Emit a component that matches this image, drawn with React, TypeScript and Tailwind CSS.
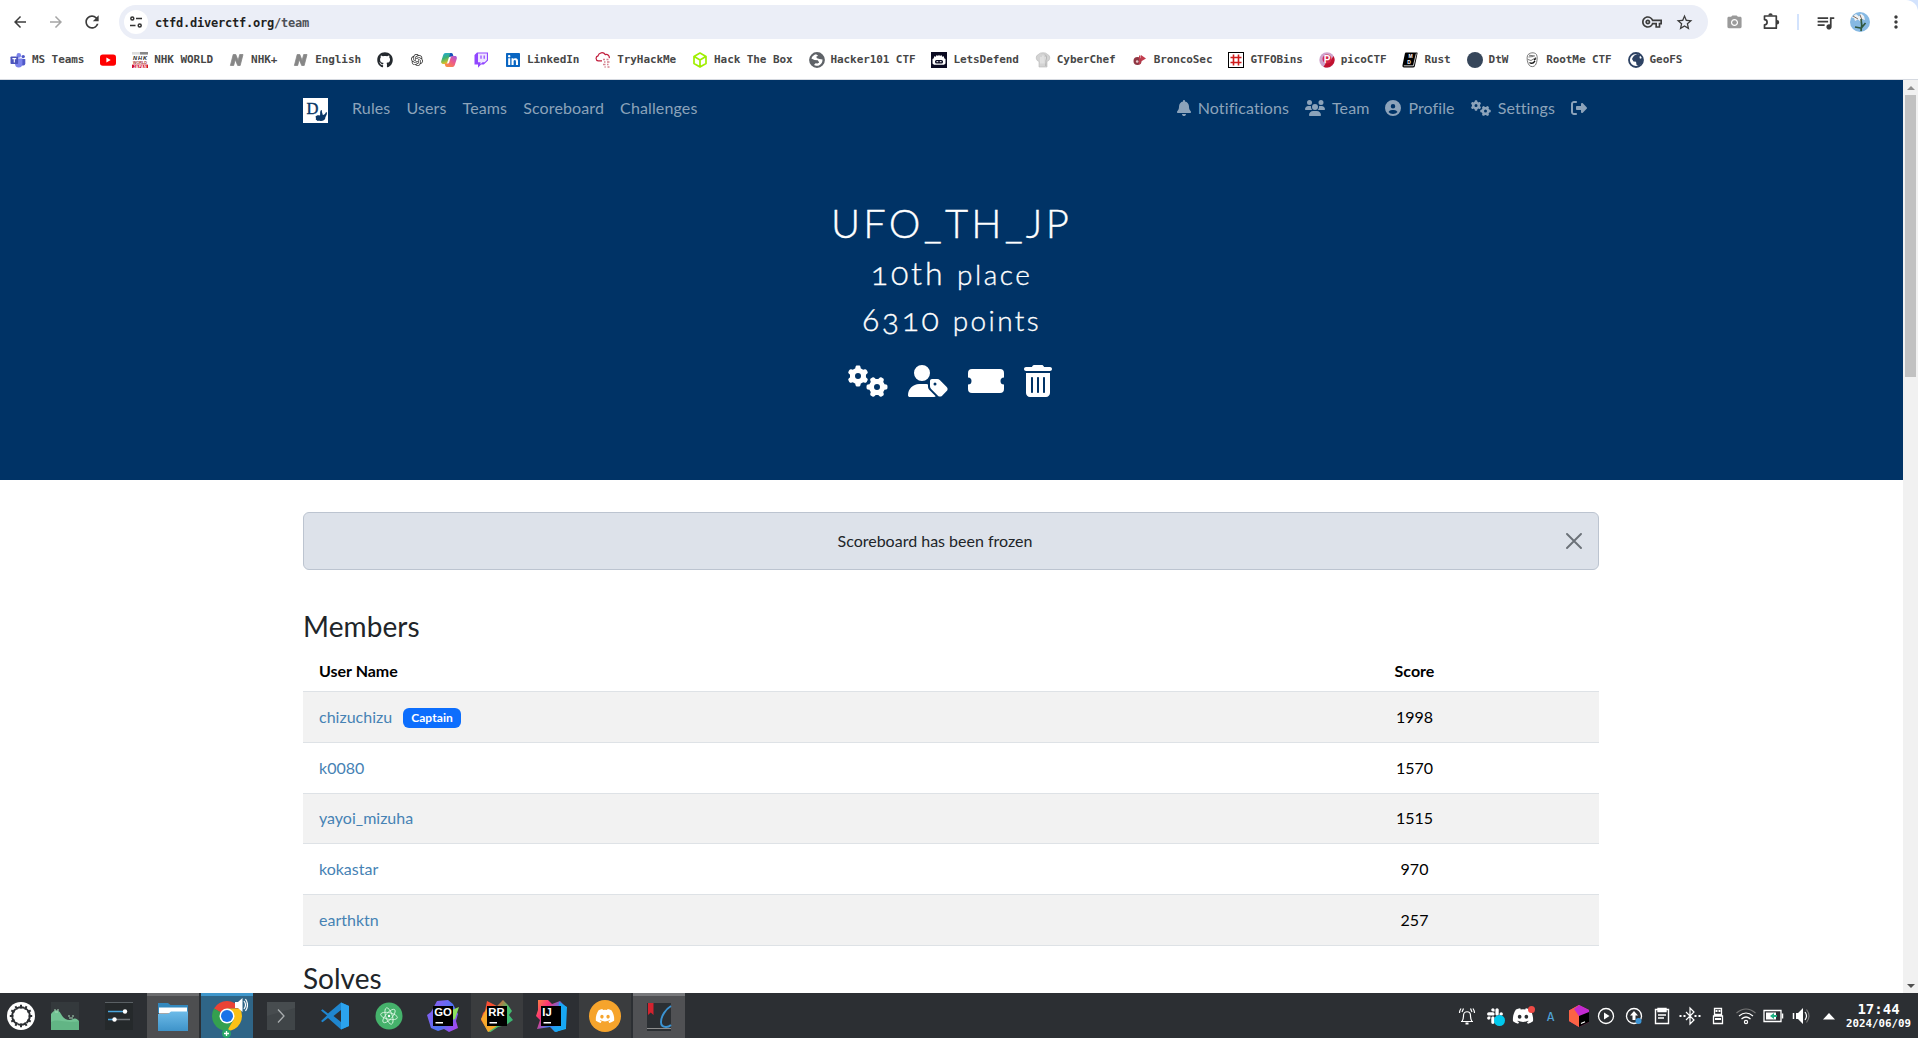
import React from "react";
import {
  FaBell,
  FaUsers,
  FaCircleUser,
  FaGears,
  FaRightFromBracket,
  FaUserTag,
  FaTrashCan,
  FaGithub,
  FaLinkedin,
  FaDiscord,
  FaSlack,
} from "react-icons/fa6";
import {
  MdArrowBack,
  MdArrowForward,
  MdRefresh,
  MdOutlineVpnKey,
  MdStarBorder,
  MdPhotoCamera,
  MdQueueMusic,
  MdMoreVert,
} from "react-icons/md";
import { SiOpenai } from "react-icons/si";

/* ---------- bookmark icons (16 x 16) ---------- */

const I = "block h-4 w-4 shrink-0";
const glyph = { fontFamily: "Liberation Sans, sans-serif", fontWeight: 700 };

const TeamsIcon = () => (
  <svg className={I} viewBox="0 0 16 16">
    <circle cx="13.2" cy="4.6" r="1.7" fill="#5059c9" />
    <path d="M11 7h4.3v4.4a2.3 2.3 0 0 1-4.3 1z" fill="#5059c9" />
    <circle cx="8.8" cy="3.4" r="2.3" fill="#7b83eb" />
    <path d="M5 6.5h7.4v5.2a3.7 3.7 0 0 1-7.4 0z" fill="#7b83eb" />
    <rect x="0.5" y="4.5" width="7.6" height="7.6" rx="0.8" fill="#4b53bc" />
    <path d="M2.4 6.6h3.8M4.3 6.6v4" stroke="#fff" strokeWidth="1.1" />
  </svg>
);
const YoutubeIcon = () => (
  <svg className={I} viewBox="0 0 16 16">
    <rect y="2.4" width="16" height="11.4" rx="2.8" fill="#f00" />
    <path d="M6.4 5.6v5l4.3-2.5z" fill="#fff" />
  </svg>
);
const NhkIcon = () => (
  <svg className={I} viewBox="0 0 16 16">
    <rect x="0" y="0" width="8" height="2.6" fill="#ddd" />
    <rect x="8" y="0" width="8" height="2.6" fill="#888" />
    <text x="8" y="8.2" fontSize="5.6" textAnchor="middle" fontStyle="italic" textLength="14" style={glyph} fill="#222">NHK</text>
    <text x="8" y="12.2" fontSize="3.8" textAnchor="middle" textLength="14" style={glyph} fill="#a33">WORLD</text>
    <rect y="12.6" width="16" height="3.4" fill="#d2102c" />
    <text x="8" y="15.7" fontSize="3.6" textAnchor="middle" textLength="13" style={glyph} fill="#fff">JAPAN</text>
  </svg>
);
const NIcon = () => (
  <svg className={I} viewBox="0 0 16 16">
    <path d="M1.400 13.500 4.200 2.500h2.600l2.300 6L10.700 2.500H14l-2.800 11H8.700L6.200 7.400 4.700 13.500z" fill="#868686" stroke="#868686" strokeWidth="0.8" strokeLinejoin="round" />
  </svg>
);
const CopilotIcon = () => (
  <svg className={I} viewBox="0 0 16 16">
    <defs>
      <linearGradient id="cpa" x1="0" y1="0" x2="0.4" y2="1">
        <stop offset="0" stopColor="#1ea7e6" />
        <stop offset="0.5" stopColor="#3bb273" />
        <stop offset="1" stopColor="#f5c518" />
      </linearGradient>
      <linearGradient id="cpb" x1="1" y1="0" x2="0.2" y2="1">
        <stop offset="0" stopColor="#a05ae0" />
        <stop offset="0.5" stopColor="#ee5a8a" />
        <stop offset="1" stopColor="#f9913d" />
      </linearGradient>
    </defs>
    <path d="M4.600 1H10c1.200 0 1.700.8 2 2l.4 1.400H9.500c-1 0-1.500.6-1.800 1.600L6.300 10.400c-.3 1-.9 1.500-1.800 1.500H2c-1.500 0-2.200-1.100-1.700-2.900l1.900-6C2.700 1.700 3.300 1 4.600 1z" fill="url(#cpa)" />
    <path d="M9.300 1H10c1.200 0 1.700.8 2 2l.4 1.400H9.500L8 5z" fill="#1c4fbf" />
    <path d="M11.400 15H6c-1.200 0-1.700-.8-2-2l-.4-1.400h2.900c1 0 1.500-.6 1.800-1.600l1.400-4.400c.3-1 .9-1.500 1.800-1.500H14c1.500 0 2.200 1.100 1.700 2.900l-1.900 6c-.5 1.300-1.100 2-2.400 2z" fill="url(#cpb)" />
  </svg>
);
const TwitchIcon = () => (
  <svg className={I} viewBox="0 0 16 16">
    <path d="M4 .4h11v8.200L10.800 12.500H8L5 15.700v-3.200H1.500V3z" fill="#9146ff" />
    <path d="M5 1.600h8.900v6.500l-2.200 2.200H9.500l-2 2v-2H5z" fill="#efe6ff" />
    <path d="M8 3.600v3.200M11.200 3.600v3.200" stroke="#9146ff" strokeWidth="1.200" />
  </svg>
);
const ThmIcon = () => (
  <svg className={I} viewBox="0 0 16 16" fill="none">
    <path d="M7 8.800H3.200A2.500 2.500 0 0 1 3 3.900 4 4 0 0 1 10.300 2.600a3 3 0 0 1 3.900 3.600" stroke="#c11d3c" strokeWidth="1.200" />
    <path d="M8 7.500h2M11.500 7.500h2M9 10h1.500M12 10h2.500M8 12.500h2.500M12 12.500h1.500M9.500 15h1.200M12.500 15h2" stroke="#d4828f" strokeWidth="1.400" />
  </svg>
);
const HtbIcon = () => (
  <svg className={I} viewBox="0 0 16 16" fill="none" stroke="#9fef00" strokeWidth="1.700" strokeLinejoin="round">
    <path d="M8 1 14 4.400v7.200L8 15l-6-3.400V4.400zM2.200 4.600 8 8l5.800-3.400M8 8v6.800" />
  </svg>
);
const GlobeIcon = ({ dark }: { dark?: boolean }) => (
  <svg className={I} viewBox="0 0 16 16">
    <circle cx="8" cy="8" r="7" fill={dark ? "#fff" : "#5f6368"} stroke={dark ? "#2d4263" : "#5f6368"} strokeWidth="1.800" />
    {dark ? (
      <path d="M9.500 2C6.500 2.500 5 4.500 4 7l1.500 2.500L8 9.800l.5 3 2 1.200 3.500-3V6l-2 .8-.6-2L13 3.600z" fill="#2d4263" />
    ) : (
      <path d="M7 2.200c-2 .6-3.700 1.800-4.600 4.200L5.500 8l3.300.200 1.400 2.200-1.700 1.200-2-.4L5 13c1 .7 3.500 1 5 .4 2.500-1 3.600-3.200 3.500-5.800L10.500 7 8 6.200l-.8-1.500 2-1z" fill="#fff" />
    )}
  </svg>
);
const LdIcon = () => (
  <svg className={I} viewBox="0 0 16 16">
    <rect width="16" height="16" fill="#0b0b22" />
    <path d="M1.500 11.500V7l1.300-.7.300-2 1.600.4 1-1.600 1.300 1L8 2.700l1 1.400 1.400-1 .9 1.600 1.600-.4.300 2 1.300.7v4.500l-1.500 1.200h-10z" fill="#fff" />
    <rect x="4" y="8" width="8" height="3.400" rx="1.500" fill="#0b0b22" />
    <path d="M5.500 9.700h1.800M8.700 9.700h1.800" stroke="#fff" strokeWidth="1" />
  </svg>
);
const ChefIcon = () => (
  <svg className={I} viewBox="0 0 16 16">
    <path d="M4 15V9.500A3.800 3.800 0 0 1 3.600 2.300 5 5 0 0 1 8 .8a5 5 0 0 1 4.400 1.500A3.800 3.800 0 0 1 12 9.500V15z" fill="#d3d3d3" stroke="#b5b5b5" strokeWidth="0.600" />
    <path d="M6 5v6.500M8 3.500v8M10.200 5v6.500" stroke="#f1f1f1" strokeWidth="0.900" />
    <path d="M10 2.500c2 1.500 1.400 4 .8 6V14" stroke="#999" strokeWidth="0.600" fill="none" />
  </svg>
);
const BroncoIcon = () => (
  <svg className={I} viewBox="0 0 16 16">
    <circle cx="5.500" cy="9" r="4" fill="#8f3743" />
    <path d="M7 3.500h1.600V12H7zM9 3l5 3.500-5 3z" fill="#c23c4d" />
    <circle cx="5.200" cy="9.500" r="1.300" fill="#e9c9cd" />
  </svg>
);
const GtfoIcon = () => (
  <svg className={I} viewBox="0 0 16 16">
    <rect x="0.500" y="0.500" width="15" height="15" fill="#fff" stroke="#000" />
    <path d="M5.500 2.500v11M10.500 2.500v11M2.500 5.500h11M2.500 10.500h11" stroke="#cf1b1b" strokeWidth="1.600" />
  </svg>
);
const PicoIcon = () => (
  <svg className={I} viewBox="0 0 16 16">
    <circle cx="8" cy="8" r="7.700" fill="#cfa3cc" />
    <path d="M14.500 4a7.700 7.700 0 0 1-10 10.700L7 11l4-1.500z" fill="#c1122f" />
    <circle cx="8" cy="7" r="4.500" fill="#d42346" />
    <text x="8" y="11.300" fontSize="10" textAnchor="middle" style={glyph} fill="#fff">P</text>
  </svg>
);
const RustIcon = () => (
  <svg className={I} viewBox="0 0 16 16">
    <path d="M4.200.5h10.600c.6 0 .8.400.700.900l-2.700 12.800c-.200.800-.7 1.200-1.500 1.200H2C.8 15.400.2 14.600.5 13.300L2.900 1.600C3 .9 3.500.5 4.200.5z" fill="#000" />
    <path d="M1.800 13.800h9.600L14.300 1.500" stroke="#fff" strokeWidth="0.800" fill="none" />
    <text x="8.500" y="6.300" fontSize="5" textAnchor="middle" style={glyph} fill="#fff">M</text>
    <text x="7" y="11.800" fontSize="5" textAnchor="middle" style={glyph} fill="#fff">D</text>
  </svg>
);
const DtwIcon = () => (
  <svg className={I} viewBox="0 0 16 16">
    <circle cx="8" cy="8" r="8" fill="#36465a" />
  </svg>
);
const RootIcon = () => (
  <svg className={I} viewBox="0 0 16 16" fill="none" stroke="#555" strokeWidth="0.800">
    <path d="M3.500 3.500C5 .5 10.500-.2 12.500 2.500c1.300 2 .7 8-1 10.500-1.500 2-4.500 2.200-6.200.3C3.500 11.500 2.500 6 3.500 3.500zM4 7.500l3 1 5-3M5 3.200l6 .800M4.500 5l5-.5" />
    <path d="M5.500 10.500c2 1.500 4 .5 5.500-1.500M10 8l2-1.500" stroke="#111" strokeWidth="1.300" />
  </svg>
);

const bookmarks: { icon: React.ReactNode; label?: string }[] = [
  { icon: <TeamsIcon />, label: "MS Teams" },
  { icon: <YoutubeIcon /> },
  { icon: <NhkIcon />, label: "NHK WORLD" },
  { icon: <NIcon />, label: "NHK+" },
  { icon: <NIcon />, label: "English" },
  { icon: <FaGithub className="block h-4 w-4 shrink-0 text-[#24292e]" /> },
  { icon: <SiOpenai className="m-0.5 block h-3 w-3 shrink-0 text-[#333]" /> },
  { icon: <CopilotIcon /> },
  { icon: <TwitchIcon /> },
  { icon: <FaLinkedin className="block h-4 w-4 shrink-0 text-[#0a66c2]" />, label: "LinkedIn" },
  { icon: <ThmIcon />, label: "TryHackMe" },
  { icon: <HtbIcon />, label: "Hack The Box" },
  { icon: <GlobeIcon />, label: "Hacker101 CTF" },
  { icon: <LdIcon />, label: "LetsDefend" },
  { icon: <ChefIcon />, label: "CyberChef" },
  { icon: <BroncoIcon />, label: "BroncoSec" },
  { icon: <GtfoIcon />, label: "GTFOBins" },
  { icon: <PicoIcon />, label: "picoCTF" },
  { icon: <RustIcon />, label: "Rust" },
  { icon: <DtwIcon />, label: "DtW" },
  { icon: <RootIcon />, label: "RootMe CTF" },
  { icon: <GlobeIcon dark />, label: "GeoFS" },
];

/* ---------- browser chrome ---------- */

function Toolbar() {
  return (
    <div className="flex h-11 items-center pl-[11px] text-[#3c3c3c]">
      <MdArrowBack className="h-[18px] w-[18px]" />
      <MdArrowForward className="ml-[18px] h-[18px] w-[18px] text-[#a5a5a5]" />
      <MdRefresh className="ml-[17px] h-[20px] w-[20px]" />
      <div className="ml-[17px] flex h-[34px] w-[1589px] items-center rounded-full bg-[#ebeef7] pl-[5px] pr-[14px]">
        <div className="flex h-6 w-6 items-center justify-center rounded-full bg-white">
          <svg className="h-3 w-3" viewBox="0 0 12 12" fill="none" stroke="#333" strokeWidth="1.500">
            <circle cx="2.300" cy="2.500" r="1.500" />
            <path d="M6 2.500h6M0 9.500h5.500" />
            <circle cx="9.700" cy="9.500" r="1.500" />
          </svg>
        </div>
        <span className="ml-[7px] mt-0.5 font-['DejaVu_Sans_Mono',monospace] text-[12px] font-bold tracking-[-0.22px] text-[#1f1f1f]">
          ctfd.diverctf.org<span className="text-[#4f5257]">/team</span>
        </span>
        <MdOutlineVpnKey className="ml-auto h-5 w-5" />
        <MdStarBorder className="ml-[13px] h-[19px] w-[19px]" />
      </div>
      <MdPhotoCamera className="ml-[18px] h-[17px] w-[17px] text-[#9a9a9a]" />
      <svg className="ml-[18px] h-5 w-5" viewBox="0 0 20 20">
        <path d="M3.500 4h11.800v12.200H3.500v-3.400c1.700 0 2.600-1.200 2.600-2.600s-.9-2.600-2.600-2.600z" fill="none" stroke="#3c3c3c" strokeWidth="1.700" strokeLinejoin="round" />
        <path d="M7.300 3.500a2.200 2.200 0 0 1 4.400 0zM16 8a2.200 2.200 0 0 1 0 4.400z" fill="#3c3c3c" />
      </svg>
      <div className="ml-[16px] h-4 w-0.5 bg-[#d3e3fd]" />
      <MdQueueMusic className="ml-[16px] h-[21px] w-[21px]" />
      <svg className="ml-[14px] h-5 w-5" viewBox="0 0 20 20">
        <circle cx="10" cy="10" r="10" fill="#86b9e3" />
        <path d="M1.500 5.500 6 2l3 2.500L11 1.500l3 2.500 1 4-3-1-1 3-3-2.500L5 9 4 6z" fill="#eef1f4" />
        <path d="M3 4l5 3M10 3l2 5" stroke="#75604d" strokeWidth="0.900" />
        <path d="M11 7c1 4 1 8 0 12M10.500 17l5-6M10.500 16 5 15" stroke="#31583f" strokeWidth="1.700" fill="none" />
      </svg>
      <MdMoreVert className="ml-[16px] h-5 w-5" />
    </div>
  );
}

function BookmarkBar() {
  return (
    <div className="flex h-[35px] items-center gap-4 border-b border-[#d5d9e0] pb-[5px] pl-[10px]">
      {bookmarks.map((b, i) => (
        <div key={i} className="flex shrink-0 items-center gap-1.5">
          {b.icon}
          {b.label && (
            <span className="mt-px whitespace-pre font-['DejaVu_Sans_Mono',monospace] text-[11px] leading-4 font-bold tracking-[-0.088px] text-[#474747]">
              {b.label}
            </span>
          )}
        </div>
      ))}
    </div>
  );
}

/* ---------- page ---------- */

const navLeft = ["Rules", "Users", "Teams", "Scoreboard", "Challenges"];

function Navbar() {
  return (
    <nav className="ml-[303px] flex h-14 w-[1296px] items-center text-base tracking-[0.1px] text-[#8ca3ba]">
      <svg className="mr-4 mt-[5px] h-[25px] w-[25px]" viewBox="0 0 25 25">
        <rect width="25" height="25" fill="#fff" />
        <text x="3.500" y="15.700" fontSize="16.500" fontFamily="Liberation Serif, serif" fontWeight="400" stroke="#0a3766" strokeWidth="0.400" fill="#0a3766">D</text>
        <path d="M12.500 18.500c1.500-1.500 3-1.500 4.500-1 .5-2-.5-3.500 1-5.500l1 .5c-.5 2 .8 3 .8 4.500 1.500 0 3-1.500 3.200-3 1 .3 1.200 1.200.7 2.500-.8 2-1.500 2.500-1.500 4-.5 1.500-2 2.500-4 2.500s-2-.5-3.500 0c-.8-1-1.800-.8-2-2 .8-.5 0-1.500-.2-2.500z" fill="#0a3766" />
      </svg>
      {navLeft.map((n) => (
        <a key={n} className="mb-px px-2 tracking-[0.13px]">{n}</a>
      ))}
      <div className="mb-px ml-auto flex items-center">
        <a className="flex items-center px-2"><FaBell className="mr-[7px] h-4 w-3.5" />Notifications</a>
        <a className="flex items-center px-2"><FaUsers className="mr-[7px] h-4 w-5" />Team</a>
        <a className="flex items-center px-2"><FaCircleUser className="mr-[7px] h-4 w-4" />Profile</a>
        <a className="flex items-center px-2"><FaGears className="mr-[7px] h-4 w-5" />Settings</a>
        <a className="flex items-center pl-2 pr-3"><FaRightFromBracket className="h-4 w-4" /></a>
      </div>
    </nav>
  );
}

function Hero() {
  return (
    <header className="h-[400px] bg-[#003366] text-white">
      <Navbar />
      <div className="flex flex-col items-center pt-[63px] font-light [font-variant-numeric:oldstyle-nums] [-webkit-text-stroke:0.35px_white]">
        <h1 className="text-[40px] leading-[48px] tracking-[3.2px]">UFO_TH_JP</h1>
        <h2 className="mt-[7px] text-[32px] leading-[38px] tracking-[2.9px]">
          10th <small className="text-[28px] tracking-[2.5px]">place</small>
        </h2>
        <h2 className="mt-[7px] text-[32px] leading-[38px] tracking-[2.6px]">
          6310 <small className="text-[28px] tracking-[2.4px]">points</small>
        </h2>
        <div className="mt-[26px] mr-[3px] flex items-center gap-5">
          <FaGears className="h-8 w-10" />
          <FaUserTag className="h-8 w-10" />
          <svg className="h-8 w-9" viewBox="0 0 36 32">
            <path d="M4 4h28a4 4 0 0 1 4 4v4.500a3.500 3.500 0 0 0 0 7V24a4 4 0 0 1-4 4H4a4 4 0 0 1-4-4v-4.500a3.500 3.500 0 0 0 0-7V8a4 4 0 0 1 4-4z" fill="#fff" />
          </svg>
          <FaTrashCan className="h-8 w-7" />
        </div>
      </div>
    </header>
  );
}

const members = [
  { name: "chizuchizu", score: 1998, captain: true },
  { name: "k0080", score: 1570 },
  { name: "yayoi_mizuha", score: 1515 },
  { name: "kokastar", score: 970 },
  { name: "earthktn", score: 257 },
];

function Content() {
  return (
    <main className="ml-[303px] w-[1296px] pt-8 text-[#212529]">
      <div className="flex h-[58px] items-center rounded-md border border-[#bcc4d0] bg-[#dde2ea] px-4">
        <span className="flex-1 pr-4 text-center">Scoreboard has been frozen</span>
        <svg className="h-4 w-4" viewBox="0 0 16 16">
          <path d="M1 1l14 14M15 1 1 15" stroke="#6b7178" strokeWidth="1.900" strokeLinecap="round" />
        </svg>
      </div>
      <h3 className="mt-[39px] text-[28px] leading-[34px] tracking-[0.1px]">Members</h3>
      <div className="mt-[9px] text-black">
        <div className="grid h-10 grid-cols-[1fr_369px] items-center border-b border-[#dee2e6] pb-px font-bold">
          <span className="pl-4">User Name</span>
          <span className="text-center">Score</span>
        </div>
        {members.map((m) => (
          <div key={m.name} className="grid h-[50.8px] grid-cols-[1fr_369px] items-center border-b border-[#dee2e6] odd:bg-white even:bg-[#f2f2f2]">
            <span className="flex items-center pl-4 text-[#4682b4]">
              {m.name}
              {m.captain && (
                <span className="ml-[11px] mt-0.5 rounded-md bg-[#0d6efd] px-2 py-1 text-[12px] leading-3 font-bold tracking-[0.1px] text-white">Captain</span>
              )}
            </span>
            <span className="text-center">{m.score}</span>
          </div>
        ))}
      </div>
      <h3 className="mt-[15px] text-[28px] leading-[34px]">Solves</h3>
    </main>
  );
}

function Scrollbar() {
  return (
    <div className="flex w-[15px] flex-col items-center bg-[#f1f1f1]">
      <div className="flex h-[15px] items-center">
        <div className="border-x-4 border-b-4 border-x-transparent border-b-[#8f8f8f]" />
      </div>
      <div className="h-[282px] w-[11px] bg-[#c1c1c1]" />
      <div className="mt-auto flex h-[15px] items-center">
        <div className="border-x-4 border-t-4 border-x-transparent border-t-[#505050]" />
      </div>
    </div>
  );
}

/* ---------- taskbar ---------- */

const T = "block h-8 w-8";

function Badge({ id, label, stops, shape, tip }: { id: string; label: string; stops: string[]; shape: string; tip?: React.ReactNode }) {
  return (
    <svg className={T} viewBox="0 0 32 32">
      <defs>
        <linearGradient id={id} x1="0" y1="0" x2="1" y2="0.700">
          {stops.map((s, i) => (
            <stop key={i} offset={i / (stops.length - 1)} stopColor={s} />
          ))}
        </linearGradient>
      </defs>
      <path d={shape} fill={`url(#${id})`} />
      {tip}
      <rect x="6" y="6" width="20" height="20" fill="#000" />
      <text x="7.300" y="16" fontSize="11.300" style={glyph} fill="#fff">{label}</text>
      <rect x="8.500" y="22" width="7.500" height="1.500" fill="#fff" />
    </svg>
  );
}

const apps: { cell?: string; icon: React.ReactNode }[] = [
  {
    icon: (
      <svg className={T} viewBox="0 0 32 32">
        <rect x="2" y="2" width="28" height="28" fill="#34393c" />
        <path d="M2 14c3-4 7-6 10 0s8 7 12 5c3-1 4 0 6 2v9H2z" fill="#72c394" />
        <path d="M2 22c8-4 14 2 28-1v9H2z" fill="#62b585" />
        <path d="M6 9v2M9 9v2M6 12h3M20 15v2M24 15v2M20 18h4" stroke="#a9d9b9" strokeWidth="1" />
      </svg>
    ),
  },
  {
    icon: (
      <svg className={T} viewBox="0 0 32 32">
        <rect x="2" y="2" width="28" height="28" fill="#25292b" />
        <path d="M2 2.500h28" stroke="#5a6064" />
        <path d="M5 11.500h16M5 19.500h6" stroke="#4aa7de" strokeWidth="1.500" />
        <path d="M12 19.500h15" stroke="#72777b" strokeWidth="1.500" />
        <circle cx="22" cy="11.500" r="2.200" fill="#fff" />
        <circle cx="11.500" cy="19.500" r="2.200" fill="#fff" />
      </svg>
    ),
  },
  {
    cell: "bg-[#4d4e50] border-t-[3px] border-[#6b6c6e]",
    icon: (
      <svg className={T} viewBox="0 0 32 32">
        <defs>
          <linearGradient id="fold" x1="0" y1="0" x2="0" y2="1">
            <stop offset="0" stopColor="#6dbbe8" />
            <stop offset="1" stopColor="#3e93c9" />
          </linearGradient>
        </defs>
        <path d="M1 2h10l2.500 2H31v8H1z" fill="#3388bd" />
        <path d="M2 6.500h28v6H2z" fill="#fff" />
        <path d="M1 13h10l3-2.500h17V30H1z" fill="url(#fold)" />
      </svg>
    ),
  },
  {
    cell: "bg-[#2f6587] border-t-[3px] border-[#3f97cc]",
    icon: (
      <svg className="block h-[42px] w-[42px]" viewBox="0 0 42 42">
        <path d="M21 20 8.010 12.500A15 15 0 0 1 33.990 12.500H21z" fill="#ea4335" />
        <path d="M21 20 8.010 12.500A15 15 0 0 0 21 35l6.500-11.250z" fill="#34a04f" />
        <path d="M21 12.500h12.990A15 15 0 0 1 21 35l6.500-11.250z" fill="#fbc116" />
        <circle cx="21" cy="20" r="7.500" fill="#fff" />
        <circle cx="21" cy="20" r="6" fill="#1a73e8" />
        <path d="M29 6h3l4.500-4v14L32 12h-3z" fill="#fff" />
        <path d="M38 5q3 4 0 8M39.500 3q4 6 0 12" stroke="#fff" strokeWidth="1.200" fill="none" />
        <circle cx="20.500" cy="37.500" r="4.500" fill="#27a567" />
        <path d="M20.500 35v5M18 37.500h5" stroke="#fff" strokeWidth="1.300" />
      </svg>
    ),
  },
  {
    icon: (
      <svg className={T} viewBox="0 0 32 32">
        <rect x="2" y="2" width="28" height="28" fill="#474c4f" />
        <path d="M2 30V16l28-8v22z" fill="#404548" />
        <path d="M13 9.500 19 16l-6 6.500" stroke="#a9adaf" strokeWidth="1.300" fill="none" />
      </svg>
    ),
  },
  {
    icon: (
      <svg className={T} viewBox="0 0 32 32">
        <path d="M22 2.500 30 6v20l-8 3.500L9 18l-5.500 4.200L2 21l6-5.500L2 10.500l1.500-1.200L9 13.500zM22 10l-7.500 6 7.500 6z" fill="#1f86cf" fillRule="evenodd" />
        <path d="M22 2.500 30 6v20l-8 3.500z" fill="#2ba3ee" />
      </svg>
    ),
  },
  {
    icon: (
      <svg className={T} viewBox="0 0 32 32">
        <circle cx="16" cy="16" r="13.500" fill="#45b26b" />
        <g fill="none" stroke="#d3f2dc" strokeWidth="0.900">
          <ellipse cx="16" cy="16" rx="8.500" ry="3.300" transform="rotate(12 16 16)" />
          <ellipse cx="16" cy="16" rx="8.500" ry="3.300" transform="rotate(72 16 16)" />
          <ellipse cx="16" cy="16" rx="8.500" ry="3.300" transform="rotate(132 16 16)" />
        </g>
        <circle cx="16" cy="16" r="1.200" fill="#fff" />
      </svg>
    ),
  },
  {
    icon: (
      <Badge
        id="go"
        label="GO"
        stops={["#7c5cf5", "#7a63f0", "#4b74f3", "#a149ee"]}
        shape="M10 1 21 0l5 4 5 10-2 7 2 7-9 4-5-3-6 2-7-3-4-13 4-3z"
        tip={<path d="M25 10 32 7l-4 12-3 1z" fill="#8be05f" />}
      />
    ),
  },
  {
    cell: "bg-[#3a3c3e]",
    icon: (
      <Badge
        id="rr"
        label="RR"
        stops={["#fb4b3c", "#f8502e", "#4abf6c", "#35b574"]}
        shape="M6 1l10 5 6-6 5 5 4 6-3 4 4 5-7 5-8 2-9 6-8-13 2-7 2-2z"
        tip={<path d="M0 19 6 8v16l10 2-9 6z" fill="#f6a82c" />}
      />
    ),
  },
  {
    icon: (
      <Badge
        id="ij"
        label="IJ"
        stops={["#fc8a3c", "#fc3176", "#3d7bf4", "#1fb4f5"]}
        shape="M3 0h10l4 4 8-3 6 6v22l-11 3-5-5-13 2 3-9-4-4 2-6z"
        tip={<path d="M24 2l8 5-1 21-10 4-4-5h8z" fill="#18a7f3" />}
      />
    ),
  },
  {
    cell: "bg-[#3a3c3e]",
    icon: (
      <div className="flex h-8 w-8 items-center justify-center rounded-full bg-[#f6a42c]">
        <FaDiscord className="h-5 w-5 text-white" />
      </div>
    ),
  },
  {
    cell: "bg-[#505154] border-t-[3px] border-[#77787b]",
    icon: (
      <svg className={T} viewBox="0 0 32 32">
        <rect x="4" y="2" width="24" height="28" fill="#2b2f33" />
        <path d="M4 27.500h24" stroke="#8d8d8d" />
        <path d="M5 2h5.500v12L7.800 11.500 5 14z" fill="#d3232f" />
        <path d="M28 5c-5 3-10 10-10 16 0 3 2 5 5 5 2 0 4-1 5-2" stroke="#3b93d2" strokeWidth="1.900" fill="none" />
      </svg>
    ),
  },
];

function Tray() {
  const S = "block h-6 w-6";
  return (
    <div className="ml-auto flex items-center gap-[3.85px] text-white">
      <svg className={S} viewBox="0 0 24 24" fill="none" stroke="#fff" strokeWidth="1.200">
        <path d="M6 17.500h12M7 17.500c1.500-2 1.500-4 1.500-6 0-5 7-5 7 0 0 2 0 4 1.500 6M4.500 9c0-2 .5-3 1.500-4.500M19.500 9c0-2-.5-3-1.500-4.500M7 8l1.500-3.500M17 8l-1.500-3.500" />
        <path d="M10.500 19.500h3" strokeWidth="2" />
      </svg>
      <div className="relative">
        <FaSlack className="m-[3px] h-[18px] w-[18px]" />
        <div className="absolute right-[2px] bottom-[2px] h-[11px] w-[11px] rounded-full bg-[#00c8ec]" />
      </div>
      <div className="relative">
        <FaDiscord className="m-[1px] h-[22px] w-[22px]" />
        <div className="absolute top-[2px] right-0 h-[7px] w-[7px] rounded-full bg-[#ef4a45]" />
      </div>
      <span className="w-6 pl-2 pt-0.5 font-['DejaVu_Sans_Mono',monospace] text-[13px] leading-6 text-[#4fa3d8]">A</span>
      <svg className={S} viewBox="0 0 24 24">
        <path d="M12 1 22 6v12l-10 5L2 17V6.500z" fill="#f2308b" />
        <path d="M2 6.500 12 1l2 11-2 11L2 17z" fill="#fb6344" />
        <path d="M12 1 22 6v5l-10 1L7 5z" fill="#c22ad0" />
        <path d="M12 12l10-4v10l-10 5z" fill="#000" />
        <path d="M14 19.500l4-1.800" stroke="#fff" strokeWidth="1.200" />
      </svg>
      <svg className={S} viewBox="0 0 24 24" fill="none" stroke="#fff" strokeWidth="1.300">
        <circle cx="12" cy="12" r="7.500" />
        <path d="M10 8.500v7l5.500-3.500z" fill="#fff" stroke="none" />
      </svg>
      <svg className={S} viewBox="0 0 24 24" fill="none" stroke="#fff" strokeWidth="1.300">
        <circle cx="12" cy="12" r="7.500" />
        <path d="M12 7l4 4.500h-2.500V16h-3v-4.500H8z" fill="#fff" stroke="none" />
        <circle cx="16.500" cy="17" r="3" fill="#3d96d8" stroke="none" />
      </svg>
      <svg className={S} viewBox="0 0 24 24" fill="none" stroke="#fff" strokeWidth="1.400">
        <path d="M5.500 5.500h13v14h-13z" />
        <path d="M8 4.500h8v3H8z" fill="#fff" />
        <path d="M8 11h8M8 14h6" />
      </svg>
      <svg className={S} viewBox="0 0 24 24" fill="none" stroke="#fff" strokeWidth="1.200">
        <path d="M8 8l8 8-4 4V4l4 4-8 8" />
        <path d="M1.500 12h2M5.500 12h2M16.500 12h2M20.500 12h2" strokeWidth="1.800" />
      </svg>
      <svg className={S} viewBox="0 0 24 24" fill="none" stroke="#fff" strokeWidth="1.300">
        <path d="M8.500 4.500h7v6h-7zM7.500 12h9v7.500h-9z" />
        <path d="M10.500 6v2M13.500 6v2M9 15h6" strokeWidth="2" />
      </svg>
      <svg className={S} viewBox="0 0 24 24" fill="none" stroke="#fff" strokeWidth="1.200">
        <path d="M2.500 9q9.500-8 19 0" stroke="#777" />
        <path d="M5 12q7-6 14 0M7.500 15q4.500-4 9 0" />
        <circle cx="12" cy="18" r="1.600" />
      </svg>
      <svg className={S} viewBox="0 0 24 24">
        <path d="M3 6.500h17v11H3z" fill="none" stroke="#fff" strokeWidth="1.300" />
        <path d="M21.500 9.500v5" stroke="#fff" strokeWidth="1.500" />
        <path d="M5 8.500h10v7H5z" fill="#fff" />
        <path d="M9 12l4-3v2h3v2h-3v2z" fill="#20b184" />
      </svg>
      <svg className={S} viewBox="0 0 24 24" fill="none">
        <path d="M4.500 9v6" stroke="#fff" strokeWidth="1.500" />
        <path d="M7 9h2l5-5v16l-5-5H7z" fill="#fff" />
        <path d="M16 8q3 4 0 8" stroke="#fff" strokeWidth="1.200" />
        <path d="M17.500 5.500q5 6.500 0 13" stroke="#777" strokeWidth="1.200" />
      </svg>
      <svg className={S} viewBox="0 0 24 24">
        <path d="M6 15.500 12 9l6 6.500z" fill="#fff" />
      </svg>
      <div className="ml-px mr-[7px] flex w-[65px] flex-col items-center pt-px font-['DejaVu_Sans_Mono',monospace] font-bold">
        <span className="text-[14px] leading-4">17:44</span>
        <span className="text-[10.8px] leading-[14px]">2024/06/09</span>
      </div>
    </div>
  );
}

function Taskbar() {
  return (
    <footer className="flex h-[45px] shrink-0 items-center bg-[#2c2f33]">
      <svg className="ml-[7px] mr-[4px] block h-7 w-7" viewBox="0 0 28 28">
        <circle cx="14" cy="14" r="14" fill="#fff" />
        <circle cx="14" cy="14" r="8.800" fill="none" stroke="#2c2f33" strokeWidth="1.900" strokeDasharray="7.900 1.315" />
        <path d="M14 2.800v3.700M14 21.500v3.700M4.300 8.400l3.200 1.900M20.500 17.700l3.200 1.900M4.300 19.600l3.200-1.900M20.500 10.300l3.200-1.900M8.400 4.300l1.900 3.200M17.700 20.500l1.900 3.200M19.600 4.300l-1.900 3.200M10.300 20.500l-1.900 3.200M2.800 14h3.700M21.500 14h3.700" stroke="#2c2f33" strokeWidth="2" />
      </svg>
      <div className="flex h-full gap-0.5">
        {apps.map((a, i) => (
          <div key={i} className={"box-border flex h-[45px] w-[52px] items-center justify-center overflow-hidden " + (a.cell ?? "")}>
            {a.icon}
          </div>
        ))}
      </div>
      <Tray />
    </footer>
  );
}

export default function App() {
  return (
    <div className="flex h-[1038px] w-[1918px] flex-col overflow-hidden bg-white font-['Lato',sans-serif]">
      <div className="h-20 shrink-0 bg-[#d3e3fd]">
        <div className="h-20 rounded-tr-xl bg-white">
          <div className="h-[45px]"><Toolbar /></div>
          <BookmarkBar />
        </div>
      </div>
      <div className="flex min-h-0 flex-1">
        <div className="min-w-0 flex-1 overflow-hidden">
          <Hero />
          <Content />
        </div>
        <Scrollbar />
      </div>
      <Taskbar />
    </div>
  );
}
